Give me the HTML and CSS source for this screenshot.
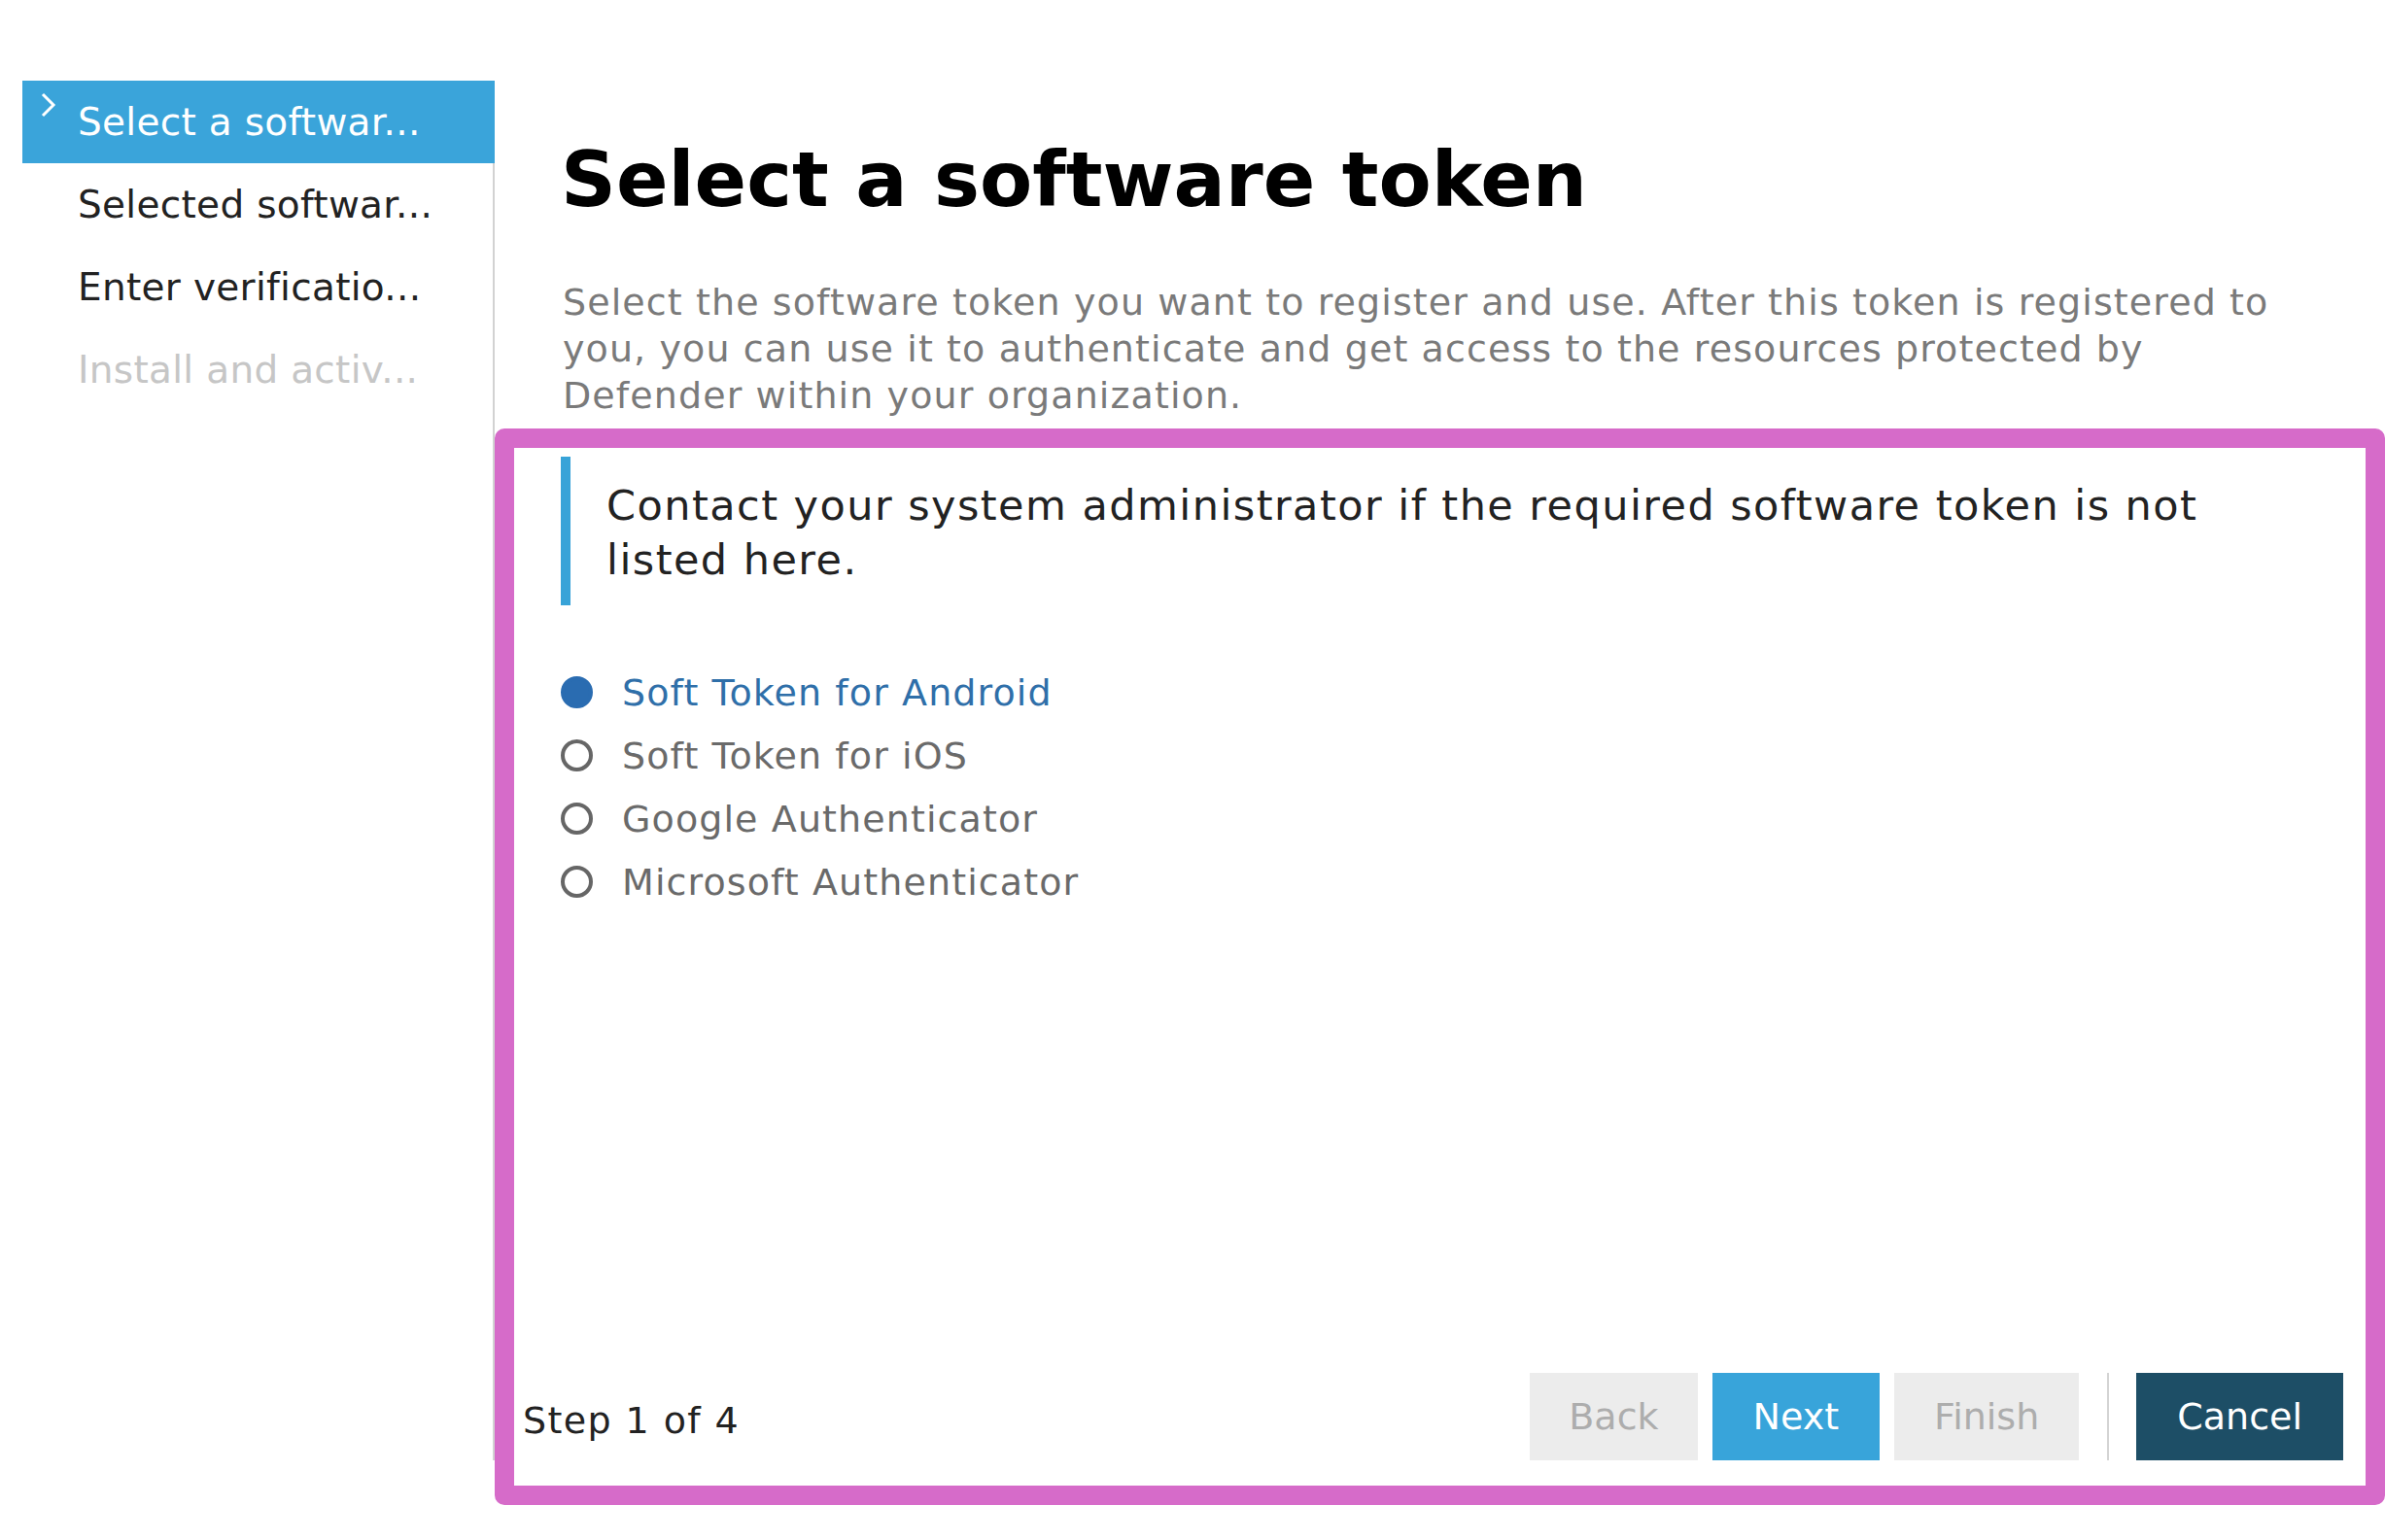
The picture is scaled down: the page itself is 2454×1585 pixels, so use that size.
FILE: index.html
```html
<!DOCTYPE html>
<html lang="en">
<head>
<meta charset="utf-8">
<title>Select a software token</title>
<link rel="stylesheet" href="styles.css">
</head>
<body>
<div class="wizard">
  <nav class="steps">
    <div class="step step-current">
      <svg class="chevron" width="18" height="28" viewBox="0 0 18 28"><polyline points="3,2 14,13 3,24" fill="none" stroke="#ffffff" stroke-width="3"/></svg>
      <span class="step-label">Select a softwar...</span>
    </div>
    <div class="step">
      <span class="chevron-space"></span>
      <span class="step-label">Selected softwar...</span>
    </div>
    <div class="step">
      <span class="chevron-space"></span>
      <span class="step-label">Enter verificatio...</span>
    </div>
    <div class="step step-disabled">
      <span class="chevron-space"></span>
      <span class="step-label">Install and activ...</span>
    </div>
  </nav>
  <main class="page">
    <div class="content">
      <h1 class="title">Select a software token</h1>
      <p class="desc">Select the software token you want to register and use. After this token is registered to you, you can use it to authenticate and get access to the resources protected by Defender within your organization.</p>
      <div class="note">
        <p class="note-text">Contact your system administrator if the required software token is not listed here.</p>
      </div>
      <ul class="options">
        <li class="option option-selected"><span class="radio radio-on"></span><span>Soft Token for Android</span></li>
        <li class="option"><span class="radio"></span><span>Soft Token for iOS</span></li>
        <li class="option"><span class="radio"></span><span>Google Authenticator</span></li>
        <li class="option"><span class="radio"></span><span>Microsoft Authenticator</span></li>
      </ul>
    </div>
    <footer class="footer">
      <span class="step-count">Step 1 of 4</span>
      <div class="buttons">
        <button class="btn btn-disabled btn-back">Back</button>
        <button class="btn btn-primary">Next</button>
        <button class="btn btn-disabled btn-finish">Finish</button>
        <span class="divider"></span>
        <button class="btn btn-dark">Cancel</button>
      </div>
    </footer>
  </main>
</div>
<div class="highlight"></div>
</body>
</html>
```
FILE: styles.css
```css
* { box-sizing: border-box; }
html, body {
  margin: 0;
  padding: 0;
  background: #ffffff;
  overflow: hidden;
}
body {
  font-family: "DejaVu Sans", Verdana, sans-serif;
  color: #222222;
  width: 2454px;
  height: 1585px;
  position: relative;
}
.wizard {
  display: flex;
  margin: 83px 0 0 23px;
  height: 1420px;
}
.steps {
  width: 486px;
  flex: none;
  border-right: 2px solid #d2d2d2;
  display: flex;
  flex-direction: column;
}
.step {
  display: flex;
  align-items: flex-start;
  height: 85px;
  padding-left: 18px;
  font-size: 39px;
  line-height: 85px;
  letter-spacing: 0.3px;
  color: #222222;
  white-space: nowrap;
}
.step-current {
  background: #3aa4da;
  color: #ffffff;
  margin-right: -2px;
}
.step-disabled { color: #c6c6c6; }
.chevron {
  flex: none;
  margin-top: 12px;
  margin-right: 21px;
}
.chevron-space {
  flex: none;
  width: 18px;
  margin-right: 21px;
}
.page {
  flex: 1;
  display: flex;
  flex-direction: column;
}
.content {
  padding: 55px 0 0 68px;
}
.title {
  margin: 0;
  font-size: 79px;
  line-height: 94px;
  font-weight: bold;
  color: #000000;
}
.desc {
  margin: 55px 0 0 2px;
  max-width: 1800px;
  font-size: 38px;
  line-height: 48px;
  letter-spacing: 1.1px;
  color: #7a7a7a;
}
.note {
  margin-top: 39px;
  border-left: 10px solid #38a3d8;
  padding: 22px 0 19px 37px;
}
.note-text {
  margin: 0;
  max-width: 1720px;
  font-size: 43px;
  line-height: 56px;
  letter-spacing: 1.45px;
  color: #222222;
}
.options {
  list-style: none;
  margin: 57px 0 0;
  padding: 0;
}
.option {
  display: flex;
  align-items: center;
  gap: 30px;
  height: 65px;
  font-size: 38px;
  letter-spacing: 1.1px;
  color: #6a6a6a;
}
.option-selected { color: #2f6fa9; }
.radio {
  flex: none;
  width: 33px;
  height: 33px;
  border-radius: 50%;
  border: 4px solid #666666;
  background: #ffffff;
}
.radio-on {
  border-color: #2a6cb1;
  background: #2a6cb1;
}
.footer {
  margin-top: auto;
  display: flex;
  align-items: center;
  justify-content: space-between;
  padding: 0 43px 0 29px;
}
.step-count {
  font-size: 38px;
  letter-spacing: 1.4px;
  color: #222222;
  padding-top: 8px;
}
.buttons {
  display: flex;
  align-items: center;
}
.btn {
  height: 90px;
  border: 0;
  margin: 0 0 0 15px;
  padding: 0 40px;
  font-family: "DejaVu Sans", Verdana, sans-serif;
  font-size: 38px;
  cursor: pointer;
}
.btn:first-child { margin-left: 0; }
.btn-back { padding: 0 40px 0 40px; }
.btn-disabled {
  background: #ececec;
  color: #adadad;
}
.btn-primary {
  background: #38a4da;
  color: #ffffff;
  padding: 0 42px;
}
.btn-finish { padding: 0 41px; }
.btn-dark {
  background: #1d4e66;
  color: #ffffff;
  margin-left: 28px;
  padding: 0 42px;
}
.divider {
  width: 2px;
  height: 90px;
  margin-left: 29px;
  background: #d4d4d4;
}
.highlight {
  position: absolute;
  left: 509px;
  top: 441px;
  width: 1945px;
  height: 1108px;
  border: 20px solid #d66bc9;
  border-radius: 10px;
  pointer-events: none;
}
```
